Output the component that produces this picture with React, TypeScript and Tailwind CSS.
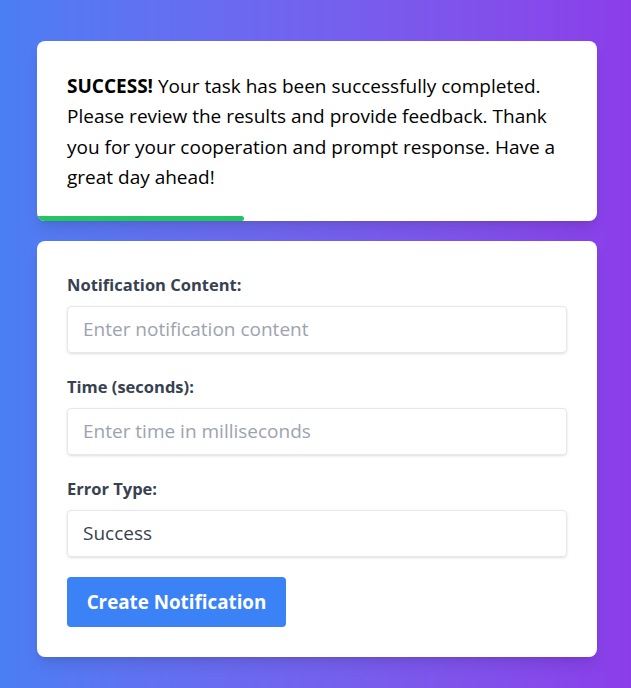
import React from "react";

export default function App() {
  return (
    <div
      className="min-h-screen w-full bg-linear-to-r from-[#4a7ef3] to-[#8b3de9] pt-[41px] pl-[37px] pb-10"
      style={{ fontFamily: "'Open Sans', 'Noto Sans', sans-serif" }}
    >
      <div className="w-[560px] flex flex-col gap-5">
        <div className="relative overflow-hidden rounded-lg bg-white shadow-lg">
          <p className="px-[30px] pt-[30px] pb-[28px] text-[19px] leading-[30.4px] text-black">
            <strong className="font-bold">SUCCESS!</strong> Your task has been successfully completed. Please review the
            results and provide feedback. Thank you for your cooperation and prompt response. Have a great day ahead!
          </p>
          <div className="absolute bottom-0 left-0 h-[5px] w-[207px] rounded-r-full bg-[#22c55e]" />
        </div>

        <div className="rounded-lg bg-white p-[30px] shadow-lg">
          <div className="mb-5">
            <label className="mb-2 block text-[16.5px] leading-[27px] font-bold text-[#374151]">Notification Content:</label>
            <input
              className="block h-[47px] w-full rounded border border-[#e5e7eb] px-[15px] text-[19px] text-[#374151] shadow-sm outline-none placeholder:text-[#9ca3af]"
              placeholder="Enter notification content"
            />
          </div>
          <div className="mb-5">
            <label className="mb-2 block text-[16.5px] leading-[27px] font-bold text-[#374151]">Time (seconds):</label>
            <input
              className="block h-[47px] w-full rounded border border-[#e5e7eb] px-[15px] text-[19px] text-[#374151] shadow-sm outline-none placeholder:text-[#9ca3af]"
              placeholder="Enter time in milliseconds"
            />
          </div>
          <div className="mb-5">
            <label className="mb-2 block text-[16.5px] leading-[27px] font-bold text-[#374151]">Error Type:</label>
            <div className="flex h-[47px] w-full items-center rounded border border-[#e5e7eb] px-[15px] text-[19px] text-[#374151] shadow-sm">
              Success
            </div>
          </div>
          <button className="h-[50px] w-[219px] rounded bg-[#3b82f6] text-[18.8px] font-bold text-white">
            Create Notification
          </button>
        </div>
      </div>
    </div>
  );
}
